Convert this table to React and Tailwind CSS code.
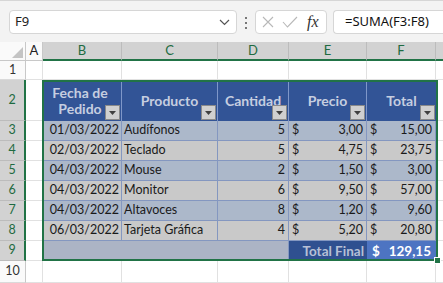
import React from 'react';

const cols = ['A', 'B', 'C', 'D', 'E', 'F'];

const orders = [
    ['01/03/2022', 'Audífonos', 5, '3,00', '15,00'],
    ['02/03/2022', 'Teclado', 5, '4,75', '23,75'],
    ['04/03/2022', 'Mouse', 2, '1,50', '3,00'],
    ['04/03/2022', 'Monitor', 6, '9,50', '57,00'],
    ['04/03/2022', 'Altavoces', 8, '1,20', '9,60'],
    ['06/03/2022', 'Tarjeta Gráfica', 4, '5,20', '20,80'],
];

function FilterButton() {
    return (
        <span className="absolute right-[1px] bottom-[1px] w-[15px] h-[15px] bg-[#d0d0d0] border border-[#8a8a8a] flex items-center justify-center">
            <svg width="7" height="4" viewBox="0 0 7 4"><path d="M0 0h7L3.5 4z" fill="#404040" /></svg>
        </span>
    );
}

function RowHead({ n, active }) {
    return (
        <div className={`flex items-center justify-center border-b ${active ? 'bg-[#d2d2d2] text-[#1e6b41] border-b-[#bcbcbc] border-r-2 border-r-[#217346]' : 'bg-[#fafafa] text-[#333] border-b-[#dadada] border-r border-r-[#c8c8c8]'}`}>
            {n}
        </div>
    );
}

function Blank({ last }) {
    return <div className={`bg-white border-b border-[#e1e1e1] ${last ? '' : 'border-r'}`} />;
}

function Money({ value, bg }) {
    return (
        <div className={`${bg} flex justify-between items-center px-[3px] border-r border-b border-[#8497c0]`}>
            <span>$</span>
            <span>{value}</span>
        </div>
    );
}

export default function App() {
    return (
        <div className="w-[443px] h-[283px] overflow-hidden bg-[#f3f3f3] font-['Lato',sans-serif] text-[13px] text-[#1a1a1a]">
            {/* formula bar */}
            <div className="h-[42px] border-t border-[#d6d6d6] flex items-start pt-[9px] pl-[9px] gap-[6px] font-['Noto_Sans',sans-serif]">
                <div className="w-[228px] h-[24px] bg-white border border-[#d6d6d6] rounded-[4px] flex items-center justify-between pl-[5px] pr-[6px] text-[13px] text-[#222]">
                    <span>F9</span>
                    <svg width="11" height="7" viewBox="0 0 11 7"><path d="M1 1l4.5 4.5L10 1" stroke="#555" strokeWidth="1.2" fill="none" /></svg>
                </div>
                <div className="w-[6px] flex flex-col items-center gap-[3px] pt-[7px]">
                    <span className="w-[2px] h-[2px] bg-[#777]" />
                    <span className="w-[2px] h-[2px] bg-[#777]" />
                    <span className="w-[2px] h-[2px] bg-[#777]" />
                </div>
                <div className="w-[72px] h-[24px] bg-white border border-[#d6d6d6] rounded-[4px] flex items-center pl-[6px] gap-[8px]">
                    <svg width="12" height="12" viewBox="0 0 12 12"><path d="M1 1l10 10M11 1L1 11" stroke="#b8b8b8" strokeWidth="1.1" /></svg>
                    <svg width="16" height="12" viewBox="0 0 16 12"><path d="M1 6l4.5 5L15 1" stroke="#b8b8b8" strokeWidth="1.1" fill="none" /></svg>
                    <span className="font-['Liberation_Serif',serif] italic text-[16px] leading-none text-[#333] ml-[1px]">fx</span>
                </div>
                <div className="flex-1 h-[24px] bg-white border border-r-0 border-[#d6d6d6] rounded-l-[4px] flex items-center pl-[11px] text-[13px] text-[#111]">
                    =SUMA(F3:F8)
                </div>
            </div>

            {/* sheet */}
            <div className="relative grid grid-cols-[26px_17px_79px_96px_71px_78px_69px_1fr] grid-rows-[19px_19px_41px_20px_20px_20px_20px_20px_20px_20px_22px] text-[12.5px]">
                {/* column headers */}
                <div className="bg-[#fafafa] border-r border-b border-[#c8c8c8] flex items-end justify-end p-[2px]">
                    <svg width="11" height="11" viewBox="0 0 11 11"><path d="M11 0v11H0z" fill="#c4c4c4" /></svg>
                </div>
                {cols.map(c => (
                    <div
                        key={c}
                        className={`flex items-center justify-center text-[13px] ${c === 'A' ? 'bg-[#fafafa] text-[#222] border-r border-b border-[#c8c8c8]' : 'bg-[#d2d2d2] text-[#1e6b41] border-r border-r-[#bcbcbc] border-b-2 border-b-[#217346]'}`}
                    >
                        {c}
                    </div>
                ))}
                <div className="bg-[#d2d2d2] border-b-2 border-b-[#217346]" />

                {/* row 1 */}
                <RowHead n={1} />
                {cols.map(c => <Blank key={c} />)}
                <Blank last />

                {/* row 2: table headers */}
                <RowHead n={2} active />
                <Blank />
                <div className="relative bg-[#325496] text-[#c6cee0] font-bold text-[14px] leading-[16px] flex items-center justify-center text-center border-r border-[#7f97c9] pr-[4px]">
                    Fecha de<br />Pedido
                    <FilterButton />
                </div>
                <div className="relative bg-[#325496] text-[#c6cee0] font-bold text-[14px] flex items-center justify-center border-r border-[#7f97c9] pb-[1px]">
                    Producto
                    <FilterButton />
                </div>
                <div className="relative bg-[#325496] text-[#c6cee0] font-bold text-[14px] flex items-center justify-center border-r border-[#7f97c9] pb-[1px] overflow-hidden whitespace-nowrap">
                    Cantidad
                    <FilterButton />
                </div>
                <div className="relative bg-[#325496] text-[#c6cee0] font-bold text-[14px] flex items-center justify-center border-r border-[#7f97c9] pb-[1px]">
                    Precio
                    <FilterButton />
                </div>
                <div className="relative bg-[#325496] text-[#c6cee0] font-bold text-[14px] flex items-center justify-center pb-[1px]">
                    Total
                    <FilterButton />
                </div>
                <Blank last />

                {/* rows 3-8: data */}
                {orders.map((r, i) => {
                    const bg = i % 2 === 0 ? 'bg-[#acb8ca]' : 'bg-[#c9c9c9]';
                    return (
                        <React.Fragment key={i}>
                            <RowHead n={i + 3} active />
                            <Blank />
                            <div className={`${bg} flex items-center justify-end px-[2px] border-r border-b border-[#8497c0]`}>{r[0]}</div>
                            <div className={`${bg} flex items-center px-[2px] border-r border-b border-[#8497c0] whitespace-nowrap`}>{r[1]}</div>
                            <div className={`${bg} flex items-center justify-end px-[3px] border-r border-b border-[#8497c0]`}>{r[2]}</div>
                            <Money value={r[3]} bg={bg} />
                            <Money value={r[4]} bg={bg} />
                            <Blank last />
                        </React.Fragment>
                    );
                })}

                {/* row 9: totals */}
                <RowHead n={9} active />
                <Blank />
                <div className="bg-[#acb4c5]" />
                <div className="bg-[#acb4c5]" />
                <div className="bg-[#acb4c5] border-r border-[#8497c0]" />
                <div className="bg-[#2f5090] text-[#b7c0d6] font-bold flex items-center justify-end px-[3px] text-[13.5px]">Total Final</div>
                <div className="bg-[#4d74c2] text-white font-bold flex items-center justify-between px-[5px] text-[13.5px]">
                    <span>$</span>
                    <span>129,15</span>
                </div>
                <Blank last />

                {/* row 10 */}
                <RowHead n={10} />
                {cols.map(c => <Blank key={c} />)}
                <Blank last />

                {/* selection outline and fill handle */}
                <div className="absolute left-[42px] top-[38px] w-[396px] h-[181px] border-2 border-[#217346] pointer-events-none" />
                <div className="absolute left-[434px] top-[215px] w-[7px] h-[7px] bg-[#217346] border border-white" />
            </div>
        </div>
    );
}
